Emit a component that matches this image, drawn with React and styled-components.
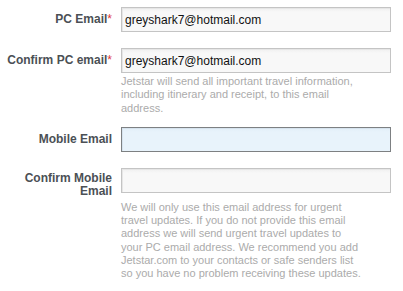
import React from "react";
import styled, { createGlobalStyle } from "styled-components";

const Global = createGlobalStyle`
  html, body { margin: 0; padding: 0; background: #fff; }
  body { font-family: Arial, "Liberation Sans", Helvetica, sans-serif; }
`;

const Form = styled.div`
  padding-top: 7px;
  width: 403px;
`;

const Row = styled.div`
  display: grid;
  grid-template-columns: 112px 270px;
  column-gap: 9px;
  margin-bottom: ${(p) => p.$mb}px;
`;

const Label = styled.label`
  text-align: right;
  font-size: 12px;
  font-weight: bold;
  color: #4b5055;
  line-height: 13px;
  padding-top: ${(p) => p.$pt}px;
`;

const Star = styled.span`
  color: #e03a3a;
  font-weight: normal;
`;

const Field = styled.div`
  display: flex;
  flex-direction: column;
`;

const Input = styled.input`
  box-sizing: border-box;
  width: 270px;
  height: 25px;
  margin: 0;
  padding: 0 3px;
  font-family: Arial, "Liberation Sans", sans-serif;
  font-size: 12px;
  color: #111;
  border: 1px solid ${(p) => (p.$focus ? "#7d8082" : "#c4c4c4")};
  background: ${(p) =>
    p.$focus
      ? "linear-gradient(#e2eef8, #e8f3fb 4px)"
      : "linear-gradient(#efefef, #f8f8f8 4px)"};
  box-shadow: inset 1px 1px 0 ${(p) => (p.$focus ? "#d6e3ee" : "#e6e6e6")};
  outline: none;
`;

const Help = styled.p`
  margin: ${(p) => p.$mt}px 0 0 0;
  width: 240px;
  font-size: 11px;
  line-height: 13.3px;
  color: #ababab;
`;

export default function App() {
  return (
    <>
      <Global />
      <Form>
        <Row $mb={16}>
          <Label $pt={6}>
            PC Email<Star>*</Star>
          </Label>
          <Field>
            <Input defaultValue="greyshark7@hotmail.com" />
          </Field>
        </Row>
        <Row $mb={12}>
          <Label $pt={6}>
            Confirm PC email<Star>*</Star>
          </Label>
          <Field>
            <Input defaultValue="greyshark7@hotmail.com" />
            <Help $mt={2}>
              Jetstar will send all important travel information, including
              itinerary and receipt, to this email address.
            </Help>
          </Field>
        </Row>
        <Row $mb={16}>
          <Label $pt={6}>Mobile Email</Label>
          <Field>
            <Input $focus />
          </Field>
        </Row>
        <Row $mb={0}>
          <Label $pt={4}>Confirm Mobile Email</Label>
          <Field>
            <Input />
            <Help $mt={8}>
              We will only use this email address for urgent travel updates. If
              you do not provide this email address we will send urgent travel
              updates to your PC email address. We recommend you add
              Jetstar.com to your contacts or safe senders list so you have no
              problem receiving these updates.
            </Help>
          </Field>
        </Row>
      </Form>
    </>
  );
}
